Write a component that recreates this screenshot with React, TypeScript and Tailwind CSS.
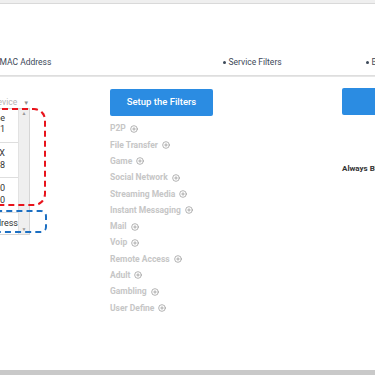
import { PlusCircle } from 'lucide-react';

const CATEGORIES = [
  'P2P',
  'File Transfer',
  'Game',
  'Social Network',
  'Streaming Media',
  'Instant Messaging',
  'Mail',
  'Voip',
  'Remote Access',
  'Adult',
  'Gambling',
  'User Define',
];

const DEVICES = [
  { a: 'Phone', b: '00:11:22:33:44:51' },
  { a: 'PC-BOX', b: '00:11:22:33:44:58' },
  { a: 'TV-20', b: '00:11:22:33:44:50' },
];

function NavItem({ label, className = '' }: { label: string; className?: string }) {
  return (
    <span className={`flex shrink-0 items-center gap-[3px] whitespace-nowrap ${className}`}>
      <span className="w-[2.5px] h-[2.5px] rounded-full bg-[#3c4858]" />
      {label}
    </span>
  );
}

export default function App() {
  return (
    <div className="w-[375px] h-[375px] overflow-hidden bg-white flex flex-col font-['Roboto',sans-serif]">
      {/* top strip */}
      <div className="h-[4px] shrink-0 bg-[#efefef] border-b border-[#d9d9d9]" />

      {/* section tabs */}
      <div className="h-[71px] shrink-0 flex items-end pb-[6px] text-[8.5px] text-[#3c4858]">
        <NavItem label="MAC Address" className="-ml-[6px] w-[229px]" />
        <NavItem label="Service Filters" className="w-[143px]" />
        <NavItem label="Block" />
      </div>
      <div className="h-[2px] shrink-0 bg-[#e6e6e6] border-t border-[#dedede]" />

      <div className="flex flex-1">
        {/* device list */}
        <div className="w-[110px] shrink-0 pt-[20px]">
          <div className="flex items-center -ml-[8px] h-[10px] text-[8.5px] text-[#b5b5b5]">
            <span>Device</span>
            <span className="ml-[6px] text-[6px] text-[#8f8f8f]">▼</span>
          </div>
          <div className="relative mt-[1px]">
            <div className="flex -ml-[81px] w-[111px] h-[127px] border border-[#d6d6d6]">
              <div className="flex-1 flex flex-col text-[9px] text-[#333] leading-[11px] text-right whitespace-nowrap">
                {DEVICES.map((d, i) => (
                  <div key={i} className={`border-b border-[#dedede] pr-[13px] ${i === 0 ? 'h-[34px] pt-[4px]' : 'h-[35px] pt-[5px]'}`}>
                    <div>{d.a}</div>
                    <div className={i === 0 ? '' : 'mt-[1px]'}>{d.b}</div>
                  </div>
                ))}
                <div className="pt-[5px] pr-[0px]">MAC Address</div>
              </div>
              <div className="w-[11px] bg-[#efefef] border-l border-[#e2e2e2] flex flex-col justify-between items-center text-[5px] text-[#999] py-[1px]">
                <span>▲</span>
                <span>▼</span>
              </div>
            </div>
            <div className="absolute -left-[20px] top-[0px] w-[66px] h-[98px] border-2 border-dashed border-[#e8141c] rounded-[12px]" />
            <div className="absolute -left-[20px] top-[102px] w-[67px] h-[23px] border-2 border-dashed border-[#1c6fc2] rounded-[6px]" />
          </div>
        </div>

        {/* service filters */}
        <div className="w-[232px] shrink-0 pt-[11px]">
          <button className="w-[103px] h-[27px] rounded-[2px] bg-[#2b8ce2] text-white text-[9.5px] font-medium">
            Setup the Filters
          </button>
          <div className="mt-[5px] flex flex-col text-[8.5px] font-bold text-[#c6c6c6]">
            {CATEGORIES.map((c) => (
              <div key={c} className="h-[16.3px] flex items-center gap-[4px]">
                <span>{c}</span>
                <PlusCircle className="w-[8px] h-[8px] text-[#8e8e8e]" strokeWidth={2} />
              </div>
            ))}
          </div>
        </div>

        {/* block */}
        <div className="flex-1 pt-[11px]">
          <div className="w-[60px] h-[27px] rounded-[2px] bg-[#2b8ce2]" />
          <div className="mt-[48px] text-[8px] font-bold text-[#333] whitespace-nowrap">Always Block</div>
        </div>
      </div>

      <div className="h-[5px] shrink-0 bg-[#c9c9c9]" />
    </div>
  );
}
